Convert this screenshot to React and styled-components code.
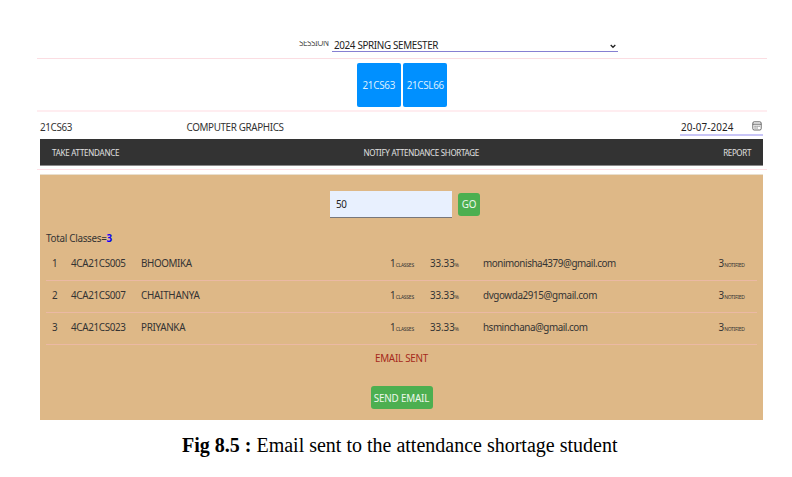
import React from "react";
import styled, { createGlobalStyle } from "styled-components";

const Global = createGlobalStyle`
  * { box-sizing: border-box; }
  body {
    margin: 0;
    background: #fff;
    color: #333;
    font-family: "Noto Sans", "Open Sans", sans-serif;
    font-size: 9.85px;
    line-height: 14px;
  }
  button, input { font: inherit; }
`;

const Page = styled.main`
  width: 792px;
  height: 477px;
  overflow: hidden;
  padding: 41px 25px 0 37px;
`;

const SessionBar = styled.div`
  display: flex;
  height: 18px;
  padding-left: 262px;
  overflow: hidden;
  border-bottom: 1px solid #fbdde2;
`;

const SessionLabel = styled.label`
  width: 33px;
  margin-top: -5px;
  color: #555;
  font-size: 8px;
  letter-spacing: -0.42px;
`;

const SemesterSelect = styled.div`
  display: flex;
  justify-content: space-between;
  align-items: center;
  width: 286px;
  height: 11px;
  padding: 0 2px 3px 2px;
  border-bottom: 1px solid #8680d2;
  color: #222;
  letter-spacing: -0.34px;
  white-space: nowrap;

  svg { margin: 3px 0 0; }
`;

const Courses = styled.div`
  display: flex;
  justify-content: center;
  gap: 2.5px;
  height: 53px;
  padding: 4px 0 0 0;
  border-bottom: 2px solid #ffedf0;
`;

const CourseButton = styled.button`
  width: 44px;
  height: 44px;
  padding: 0;
  border: 0;
  border-radius: 2px;
  background: #0090ff;
  color: #d9eeff;
  letter-spacing: ${(p) => p.$spacing}px;
  white-space: nowrap;
`;

const Subject = styled.div`
  display: flex;
  height: 26px;
  padding: 8px 4px 0 3px;
`;

const SubjectText = styled.span`
  width: ${(p) => p.$width};
  letter-spacing: ${(p) => p.$spacing}px;
`;

const DateField = styled.div`
  display: flex;
  justify-content: space-between;
  width: 83px;
  height: 16px;
  margin-left: auto;
  padding: 0 1px;
  border-bottom: 2px solid #c8c5f7;
  letter-spacing: 0.1px;
  color: #222;

  svg { margin-top: 1px; }
`;

const ActionBar = styled.nav`
  display: flex;
  align-items: center;
  justify-content: space-between;
  height: 27px;
  margin: 1px 4px 0 3px;
  padding: 1px 12px 0;
  background: #333;
  border-bottom: 1px solid #8b8b8b;
  color: #e0e0e0;
  font-size: 8px;
`;

const ActionLink = styled.span`
  letter-spacing: ${(p) => p.$spacing}px;
`;

const Divider = styled.div`
  height: 8px;
  padding-top: 3px;

  &::after {
    content: "";
    display: block;
    height: 1px;
    background: #ffe1e6;
  }
`;

const Panel = styled.section`
  height: 246px;
  margin: 0 4px 0 3px;
  padding: 16px 6px 0;
  background: #deb887;
  border-top: 1px solid #e9dfcf;
  display: flex;
  flex-direction: column;
`;

const Threshold = styled.div`
  display: flex;
  align-items: center;
  gap: 6px;
  height: 26px;
  padding-left: 284px;
`;

const PercentInput = styled.input`
  width: 122px;
  height: 27px;
  padding: 1px 6px 0;
  border: 0;
  border-bottom: 1px solid #77777c;
  border-radius: 0;
  background: #e8f0fe;
  color: #222;
  letter-spacing: -0.3px;
`;

const GreenButton = styled.button`
  width: ${(p) => p.$width}px;
  height: 23px;
  padding: 0;
  border: 0;
  border-radius: 3px;
  background: #4caf50;
  color: #ecf8ec;
  letter-spacing: ${(p) => p.$spacing || 0}px;
  white-space: nowrap;
`;

const Total = styled.p`
  height: 18px;
  margin: 14px 0 0;
  letter-spacing: -0.28px;

  b { color: #0c00f5; }
`;

const Row = styled.div`
  display: grid;
  grid-template-columns: 19px 70px 249px 40px 53px 235.5px 1fr;
  align-items: center;
  height: 32px;
  padding: 0 0 4px 6px;
  border-bottom: 1px solid #ebb9a4;
  white-space: nowrap;
`;

const Cell = styled.span`
  letter-spacing: ${(p) => p.$spacing || 0}px;

  small {
    font-size: 5px;
    line-height: 0;
    letter-spacing: ${(p) => p.$unitSpacing || 0}px;
  }
`;

const Result = styled.div`
  display: flex;
  flex-direction: column;
  align-items: center;
  gap: 21px;
  padding: 6px 0 0;
`;

const Message = styled.span`
  color: #a52a1c;
  letter-spacing: -0.25px;
`;

const Caption = styled.p`
  margin: 14px 0 0 145px;
  color: #000;
  font-family: "Liberation Serif", serif;
  font-size: 20px;
  line-height: 22px;
  white-space: nowrap;
`;

const students = [
  { id: "4CA21CS005", name: "BHOOMIKA", nameSpacing: -0.4, email: "monimonisha4379@gmail.com", emailSpacing: -0.43 },
  { id: "4CA21CS007", name: "CHAITHANYA", nameSpacing: -0.25, email: "dvgowda2915@gmail.com", emailSpacing: -0.38 },
  { id: "4CA21CS023", name: "PRIYANKA", nameSpacing: -0.3, email: "hsminchana@gmail.com", emailSpacing: -0.46 },
];

function Chevron() {
  return (
    <svg width="6" height="5" viewBox="0 0 6 5" fill="none" stroke="#222" strokeWidth="1.3">
      <path d="M0.7 1L3 3.3L5.3 1" />
    </svg>
  );
}

function CalendarIcon() {
  return (
    <svg width="10" height="10" viewBox="0 0 10 10" fill="none" stroke="#444" strokeWidth="0.8">
      <rect x="0.8" y="0.8" width="8.4" height="8.2" rx="1.4" />
      <path d="M0.8 3.2H9.2" />
      <path d="M2.5 5.2H3.6M4.5 5.2H5.6M6.5 5.2H7.6M2.5 7H3.6M4.5 7H5.6" strokeWidth="1" />
    </svg>
  );
}

export default function App() {
  return (
    <Page>
      <Global />
      <SessionBar>
        <SessionLabel>SESSION</SessionLabel>
        <SemesterSelect>
          2024 SPRING SEMESTER
          <Chevron />
        </SemesterSelect>
      </SessionBar>
      <Courses>
        <CourseButton $spacing={-0.25}>21CS63</CourseButton>
        <CourseButton $spacing={-0.3}>21CSL66</CourseButton>
      </Courses>
      <Subject>
        <SubjectText $width="146.5px" $spacing={-0.35}>21CS63</SubjectText>
        <SubjectText $width="auto" $spacing={-0.36}>COMPUTER GRAPHICS</SubjectText>
        <DateField>
          20-07-2024
          <CalendarIcon />
        </DateField>
      </Subject>
      <ActionBar>
        <ActionLink $spacing={-0.25}>TAKE ATTENDANCE</ActionLink>
        <ActionLink $spacing={-0.3}>NOTIFY ATTENDANCE SHORTAGE</ActionLink>
        <ActionLink $spacing={-0.35}>REPORT</ActionLink>
      </ActionBar>
      <Divider />
      <Panel>
        <Threshold>
          <PercentInput defaultValue="50" />
          <GreenButton $width={22} $spacing={-0.3}>GO</GreenButton>
        </Threshold>
        <Total>Total Classes=<b>3</b></Total>
        {students.map((s, i) => (
          <Row key={s.id}>
            <Cell>{i + 1}</Cell>
            <Cell $spacing={-0.33}>{s.id}</Cell>
            <Cell $spacing={s.nameSpacing}>{s.name}</Cell>
            <Cell $unitSpacing={-0.25}>1<small>CLASSES</small></Cell>
            <Cell $spacing={-0.1}>33.33<small>%</small></Cell>
            <Cell $spacing={s.emailSpacing}>{s.email}</Cell>
            <Cell $unitSpacing={-0.3}>3<small>NOTIFIED</small></Cell>
          </Row>
        ))}
        <Result>
          <Message>EMAIL SENT</Message>
          <GreenButton $width={62} $spacing={-0.2}>SEND EMAIL</GreenButton>
        </Result>
      </Panel>
      <Caption>
        <b>Fig 8.5 :</b> Email sent to the attendance shortage student
      </Caption>
    </Page>
  );
}
